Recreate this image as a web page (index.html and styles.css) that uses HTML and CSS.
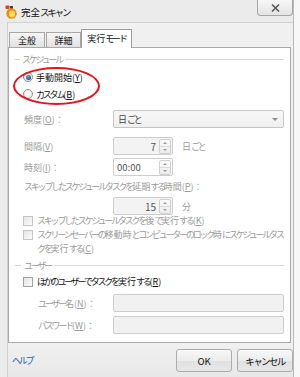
FILE: index.html
```html
<!DOCTYPE html>
<html lang="ja">
<head>
<meta charset="utf-8">
<title>完全スキャン</title>
<link rel="stylesheet" href="styles.css">
</head>
<body>
<div class="window">
  <div class="titlebar">
    <svg class="app-icon" width="12" height="14" viewBox="0 0 12 14">
      <rect x="0.5" y="0.5" width="4" height="3.5" rx="1" fill="#d8401c"/>
      <ellipse cx="6.5" cy="8.5" rx="5.2" ry="5.2" fill="#ef8a1a"/>
      <ellipse cx="7" cy="9" rx="3" ry="3.4" fill="#ffe04d"/>
      <rect x="5" y="1" width="3" height="2.5" fill="#5a3a10"/>
    </svg>
    <span class="title">完全<span class="k">スキャン</span></span>
    <div class="close">
      <svg width="9" height="8" viewBox="0 0 9 8"><path d="M1 0.5 L8 7.5 M8 0.5 L1 7.5" stroke="#555" stroke-width="1.5"/></svg>
    </div>
  </div>
  <div class="client">
    <div class="tabs">
      <div class="tab tab-general">全般</div>
      <div class="tab tab-detail">詳細</div>
      <div class="tab tab-active">実行<span class="k">モード</span></div>
    </div>
    <div class="panel">
      <div class="group-head"><span class="k">スケジュール</span></div>
      <div class="opt opt-first"><span class="radio checked"></span><span>手動開始(<u>Y</u>)</span></div>
      <div class="opt opt-second"><span class="radio"></span><span><span class="k">カスタム</span>(<u>B</u>)</span></div>

      <div class="field field-freq">
        <span class="label">頻度(<u>O</u>)：</span>
        <div class="box select"><span class="value">日<span class="k">ごと</span></span><span class="arrow"></span></div>
      </div>
      <div class="field field-interval">
        <span class="label">間隔(<u>V</u>)</span>
        <div class="box spinbox"><span class="num">7</span><span class="spin"><span class="up"></span><span class="down"></span></span></div>
        <span class="unit">日<span class="k">ごと</span></span>
      </div>
      <div class="field field-time">
        <span class="label">時刻(<u>I</u>)：</span>
        <div class="box spinbox white"><span class="num left">00:00</span><span class="spin"><span class="up"></span><span class="down"></span></span></div>
      </div>
      <div class="line-label"><span class="k">スキップしたスケジュールタスクを</span>延期<span class="k">する</span>時間(<u>P</u>)：</div>
      <div class="field field-delay">
        <span class="label"></span>
        <div class="box spinbox"><span class="num">15</span><span class="spin"><span class="up"></span><span class="down"></span></span></div>
        <span class="unit">分</span>
      </div>
      <div class="check check-k"><span class="cb"></span><span class="ctext"><span class="k">スキップしたスケジュールタスクを</span>後<span class="k">で</span>実行<span class="k">する</span>(<u>K</u>)</span></div>
      <div class="check check-c"><span class="cb"></span><span class="ctext"><span class="k">スクリーンセーバーの</span>移動時<span class="k">とコンピューターのロック</span>時<span class="k">にスケジュールタス</span><br><span class="k">クを</span>実行<span class="k">する</span>(<u>C</u>)</span></div>

      <div class="group-head group-user"><span class="k">ユーザー</span></div>
      <div class="check check-r enabled"><span class="cb"></span><span class="ctext"><span class="k">ほかのユーザーでタスクを</span>実行<span class="k">する</span>(<u>R</u>)</span></div>
      <div class="field user-field field-name">
        <span class="label"><span class="k">ユーザー</span>名(<u>N</u>)：</span>
        <div class="box text"></div>
      </div>
      <div class="field user-field field-pass">
        <span class="label"><span class="k">パスワード</span>(<u>W</u>)：</span>
        <div class="box text"></div>
      </div>

      <div class="highlight"></div>
    </div>
    <div class="footer">
      <span class="help k">ヘルプ</span>
      <div class="buttons">
        <button class="btn">OK</button>
        <button class="btn"><span class="k">キャンセル</span></button>
      </div>
    </div>
  </div>
</div>
</body>
</html>
```
FILE: styles.css
```css
* { box-sizing: border-box; }
html, body { margin: 0; padding: 0; }
body {
  width: 300px;
  height: 377px;
  overflow: hidden;
  background: #f7f7f7;
  font-family: "Noto Sans CJK JP", "Noto Sans", sans-serif;
  font-size: 9px;
  color: #1a1a1a;
}
u { text-decoration: underline; text-underline-offset: 1px; }
.k { letter-spacing: -2.2px; }

.window {
  width: 294px;
  height: 377px;
  background: #ebebeb;
  border-right: 1px solid #b8b8b8;
  display: flex;
  flex-direction: column;
}

.titlebar {
  height: 22px;
  display: flex;
  align-items: flex-start;
  padding-left: 5px;
  flex: none;
}
.app-icon { margin-top: 5px; flex: none; }
.title {
  margin-left: 4px;
  margin-top: 4px;
  line-height: 16px;
  font-size: 9.5px;
  color: #111;
}
.close {
  margin-left: auto;
  width: 36px;
  height: 16px;
  border: 1px solid #a6a6a6;
  border-top: none;
  border-radius: 0 0 4px 4px;
  background: linear-gradient(#f7f7f7, #e4e4e4);
  display: flex;
  align-items: center;
  justify-content: center;
}

.client {
  flex: 1;
  margin-left: 7px;
  border-left: 1px solid #cfcfcf;
  border-top: 1px solid #d4d4d4;
  background: #f0f0f0;
  display: flex;
  flex-direction: column;
}

.tabs {
  display: flex;
  align-items: flex-end;
  height: 18px;
  margin-top: 6px;
  padding-left: 1px;
  position: relative;
  z-index: 1;
}
.tab {
  height: 15px;
  border: 1px solid #a7a7a7;
  border-bottom: none;
  background: linear-gradient(#f6f6f6, #e2e2e2);
  display: flex;
  align-items: center;
  justify-content: center;
  line-height: 13px;
  color: #111;
}
.tab-general { width: 36px; }
.tab-detail { width: 35px; margin-left: 1px; }
.tab-active {
  width: 51px;
  height: 19px;
  margin-bottom: -1px;
  background: #fff;
  border-color: #9d9d9d;
  padding-bottom: 2px;
}

.panel {
  position: relative;
  width: 283px;
  height: 296px;
  border: 1px solid #a9a9a9;
  background: #fff;
  padding: 4px 6px 0 6px;
  flex: none;
}

.group-head {
  display: flex;
  align-items: center;
  height: 14px;
  color: #9a9a9a;
}
.group-head::before {
  content: "";
  width: 5px;
  border-top: 1px solid #d6d6d6;
  margin-right: 2px;
}
.group-head::after {
  content: "";
  flex: 1;
  border-top: 1px solid #d6d6d6;
  margin-left: 3px;
}
.group-user { margin-top: 2px; }
.group-user::before { width: 6px; margin-right: 3px; }

.opt {
  display: flex;
  align-items: center;
  height: 14px;
  padding-left: 8px;
  color: #111;
}
.opt-first { margin-top: 4px; }
.opt-second { margin-top: 3px; }
.radio {
  position: relative;
  width: 10px;
  height: 10px;
  border-radius: 50%;
  border: 1px solid #8f9090;
  background: radial-gradient(circle at 50% 40%, #ffffff, #e2e2e2);
  margin-right: 3px;
  flex: none;
}
.radio.checked::after {
  content: "";
  position: absolute;
  left: 1.5px;
  top: 1.5px;
  width: 5px;
  height: 5px;
  border-radius: 50%;
  background: radial-gradient(circle at 40% 35%, #6fa8e0, #1d4f8e 70%);
}

.field {
  display: flex;
  align-items: center;
  height: 18px;
  padding-left: 9px;
  color: #9a9a9a;
}
.field .label { width: 89px; flex: none; white-space: nowrap; }
.field-freq { margin-top: 9px; }
.field-interval { margin-top: 9px; }
.field-time { margin-top: 3px; }
.field-delay { margin-top: 3px; }

.box {
  height: 18px;
  border: 1px solid #cdcdcd;
  border-radius: 2px;
  background: #f3f3f3;
  display: flex;
  align-items: center;
}
.select {
  flex: 1;
  padding-left: 4px;
  padding-right: 5px;
  background: linear-gradient(#f7f7f7, #efefef);
  border-color: #c6c6c6;
}
.select .value { color: #444; flex: 1; }
.arrow {
  width: 0;
  height: 0;
  border-left: 3px solid transparent;
  border-right: 3px solid transparent;
  border-top: 3px solid #8c8c8c;
}
.spinbox { width: 60px; padding-right: 1px; }
.spinbox.white { background: #fff; }
.num {
  flex: 1;
  text-align: right;
  padding-right: 3px;
  color: #555;
  font-size: 10px;
}
.num.left { text-align: left; padding-left: 3px; font-size: 9.5px; }
.spin {
  width: 12px;
  height: 15px;
  border: 1px solid #d0d0d0;
  border-radius: 2px;
  background: linear-gradient(#fbfbfb, #ececec);
  display: flex;
  flex-direction: column;
}
.spin .up, .spin .down {
  flex: 1;
  display: flex;
  align-items: center;
  justify-content: center;
}
.spin .up { border-bottom: 1px solid #dadada; }
.spin .up::after {
  content: "";
  border-left: 2px solid transparent;
  border-right: 2px solid transparent;
  border-bottom: 2px solid #9a9a9a;
}
.spin .down::after {
  content: "";
  border-left: 2px solid transparent;
  border-right: 2px solid transparent;
  border-top: 2px solid #9a9a9a;
}
.unit { margin-left: 9px; color: #9a9a9a; }

.line-label {
  margin-top: 4px;
  height: 14px;
  line-height: 14px;
  padding-left: 9px;
  color: #9a9a9a;
  white-space: nowrap;
}

.check {
  display: flex;
  align-items: flex-start;
  padding-left: 8px;
  line-height: 14px;
  color: #9a9a9a;
  white-space: nowrap;
}
.check-k { margin-top: -1px; }
.check-r { margin-top: 3px; }
.check.enabled { color: #111; }
.cb {
  width: 10px;
  height: 10px;
  margin-top: 2px;
  margin-right: 4px;
  border: 1px solid #c4c4c4;
  background: linear-gradient(135deg, #e6e6e6, #fbfbfb);
  flex: none;
}
.check.enabled .cb { border-color: #a0a0a0; }

.user-field { padding-left: 23px; }
.user-field .label { width: 75px; }
.field-name { margin-top: 5px; }
.field-pass { margin-top: 4px; }
.text { flex: 1; background: #f1f1f1; }

.highlight {
  position: absolute;
  left: 4px;
  top: 19px;
  width: 87px;
  height: 38px;
  border: 2px solid #e5141c;
  border-radius: 50%;
}

.footer {
  flex: 1;
  display: flex;
  align-items: flex-start;
  padding: 6px 0 0 4px;
  background: linear-gradient(#f0f0f0, #e8e8e8);
}
.help {
  margin-top: 5px;
  line-height: 14px;
  color: #2760a6;
}
.buttons {
  margin-left: auto;
  display: flex;
  gap: 5px;
}
.btn {
  font: inherit;
  font-size: 9.5px;
  width: 56px;
  height: 23px;
  padding: 0;
  border: 1px solid #acacac;
  border-radius: 3px;
  background: linear-gradient(#f8f8f8 0%, #ececec 50%, #e0e0e0 51%, #e7e7e7 100%);
  color: #111;
}
.btn .k { letter-spacing: -1.6px; }
```
